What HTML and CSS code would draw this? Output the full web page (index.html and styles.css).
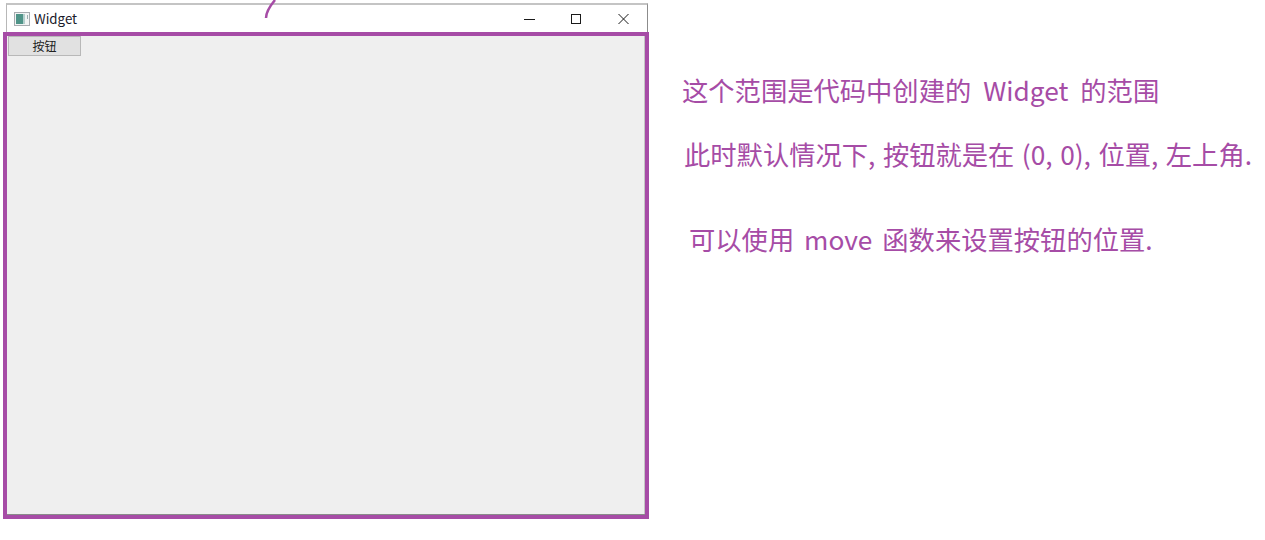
FILE: index.html
```html
<!DOCTYPE html>
<html lang="zh-CN">
<head>
    <meta charset="UTF-8">
    <title>Widget</title>
    <link rel="stylesheet" href="styles.css">
</head>
<body>
    <div class="shot">
        <div class="capture">
            <div class="titlebar">
                <svg class="app-icon" width="16" height="14" viewBox="0 0 16 14">
                    <rect x="0.5" y="0.5" width="15" height="13" fill="#f2f4f4" stroke="#a8acb0"/>
                    <rect x="2" y="2" width="7" height="10" fill="#4f9488"/>
                    <rect x="9" y="2" width="2" height="10" fill="#b4cfcc"/>
                    <rect x="13" y="3" width="1" height="4" fill="#9ab0b0"/>
                </svg>
                <span class="title">Widget</span>
                <div class="controls">
                    <svg class="control" width="46" height="28" viewBox="0 0 46 28">
                        <path d="M18 14.5h11" stroke="#1a1a1a" fill="none"/>
                    </svg>
                    <svg class="control" width="48" height="28" viewBox="0 0 48 28">
                        <rect x="19.5" y="9.5" width="9" height="9" stroke="#1a1a1a" fill="none"/>
                    </svg>
                    <svg class="control" width="47" height="28" viewBox="0 0 47 28">
                        <path d="M18.5 9l10 10M28.500 9l-10 10" stroke="#1a1a1a" fill="none"/>
                    </svg>
                </div>
            </div>
            <div class="frame">
                <button class="qt-button">按钮</button>
            </div>
        </div>
        <svg class="arrow-tail" width="16" height="20" viewBox="0 0 16 20">
            <path d="M2 18c0-6 4-12 9-18" stroke="#a64ca6" stroke-width="2.500" fill="none"/>
        </svg>
        <div class="notes">
            <p class="note note-range">这个范围是代码中创建的 Widget 的范围</p>
            <p class="note note-default">此时默认情况下, 按钮就是在 (0, 0), 位置, 左上角.</p>
            <p class="note note-move">可以使用 move 函数来设置按钮的位置.</p>
        </div>
    </div>
</body>
</html>
```

FILE: styles.css
```css
* {
    margin: 0;
    padding: 0;
    box-sizing: border-box;
}

body {
    background: #fff;
    height: 540px;
    overflow: hidden;
    font-family: "Noto Sans CJK SC", "Noto Sans", sans-serif;
}

.shot {
    position: relative;
    display: flex;
}

.capture {
    width: 646px;
    margin-left: 3px;
    padding-top: 3px;
    flex-shrink: 0;
}

/* window title bar */
.titlebar {
    display: flex;
    align-items: center;
    height: 29px;
    margin-left: 3px;
    margin-right: 1px;
    border-top: 2px solid #c4c4c4;
    border-left: 1px solid #b8b8b8;
    border-right: 1px solid #8c8c8c;
    background: #fff;
}

.app-icon {
    margin-left: 7px;
    flex-shrink: 0;
}

.title {
    margin-left: 4px;
    font-size: 13.300px;
    color: #1a1a2a;
}

.controls {
    display: flex;
    margin-left: auto;
}

.control {
    display: block;
}

/* purple marker box drawn on the screenshot */
.frame {
    height: 487px;
    border: 4px solid #a64ca6;
    background: #efefef;
    padding: 0 0 0 1px;
    box-shadow: inset 0 -1px 0 #8a8a8a, inset -1px 0 0 #c4c4c4;
}

.qt-button {
    display: block;
    width: 73px;
    height: 20px;
    padding-bottom: 2px;
    border: 1px solid #b8b8b8;
    background: #e1e1e1;
    font-family: "Noto Sans CJK SC", sans-serif;
    font-size: 12px;
    color: #222;
}

.arrow-tail {
    position: absolute;
    left: 264px;
    top: 0;
}

.notes {
    flex: 1;
    color: #a64ca6;
    font-size: 26.300px;
    white-space: nowrap;
}

.note {
    line-height: 36px;
}

.note-range {
    margin: 72px 0 0 33px;
    word-spacing: 6px;
}

.note-default {
    margin: 28px 0 0 35px;
    word-spacing: 1.600px;
}

.note-move {
    margin: 49px 0 0 40px;
    word-spacing: 4px;
}
```
